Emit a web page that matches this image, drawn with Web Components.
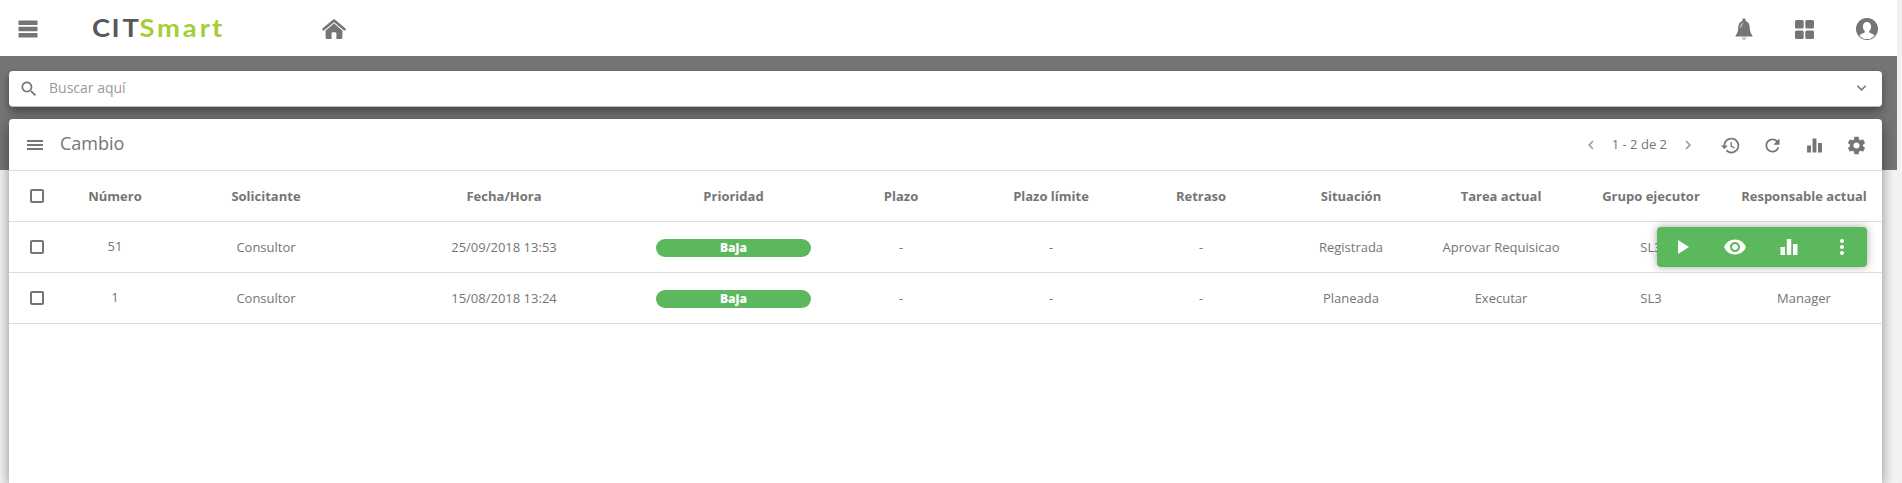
<!DOCTYPE html>
<html lang="es"><head><meta charset="utf-8"><title>CITSmart</title>
<style>
html,body{margin:0;height:100%}
body{font-family:"Open Sans",sans-serif;font-size:13px;color:#757575;background:#f1f1f1;overflow:hidden}
</style></head><body>
<cit-app></cit-app>
<script>
const ICONS={
 bars:['0 0 20 18','<rect x=".5" y=".5" width="19" height="4.4" rx=".6"/><rect x=".5" y="6.8" width="19" height="4.4" rx=".6"/><rect x=".5" y="13.1" width="19" height="4.4" rx=".6"/>'],
 home:['0 0 24 20','<path d="M12 3.9 3.6 11.4V18.500Q3.600 20 5.100 20H9.600V14.500Q9.600 13.300 10.800 13.300H13.200Q14.400 13.300 14.400 14.500V20H18.900Q20.400 20 20.400 18.500V11.400Z"/><path d="M1.500 10.300 12 1.500 22.500 10.300" fill="none" stroke="currentColor" stroke-width="2.500" stroke-linecap="round" stroke-linejoin="round"/><path d="M3.200 11.500 12 4.100 20.800 11.500" fill="none" stroke="#fff" stroke-width=".6"/>'],
 bell:['0 0 18 22','<path d="M9 .4c1 0 1.700.7 1.700 1.700v.8c2.700.9 3.900 3.200 4 6.100.1 4.200.9 6.300 2.600 8.300.4.500.2 1.300-.5 1.300H1.200c-.7 0-.9-.8-.5-1.300 1.700-2 2.500-4.100 2.600-8.300.1-2.900 1.300-5.200 4-6.100v-.8C7.300 1.100 8 .4 9 .4z"/><path d="M6.800 19.600h4.400A2.200 2.200 0 0 1 6.800 19.600z" opacity=".55"/><path d="M5.700 9.500c0-2.200.9-3.600 2.500-4.100" fill="none" stroke="#fff" stroke-width=".8"/>'],
 apps:['0 0 19 19','<rect width="8.700" height="8.500" rx="1.500"/><rect x="10.300" width="8.700" height="8.500" rx="1.500"/><rect y="10.500" width="8.700" height="8.500" rx="1.500"/><rect x="10.300" y="10.500" width="8.700" height="8.500" rx="1.500"/>'],
 user:['0 0 22 22','<circle cx="11" cy="11" r="11"/><path d="M11 3.900c2.500 0 4.100 1.900 4.100 4.500 0 1.900-.8 3.700-1.900 4.600v1.200c1.300 1.100 3.500 1.200 4.800 2.700 .5.6.3 1-.2 1.500A10 10 0 0 1 4.200 18.400c-.5-.5-.7-.9-.2-1.500 1.300-1.500 3.500-1.600 4.800-2.700V13C7.700 12.100 6.900 10.300 6.900 8.400 6.900 5.800 8.500 3.900 11 3.900z" fill="#fff"/>'],
 search:['0 0 24 24','<path d="M15.500 14h-.79l-.28-.27C15.410 12.590 16 11.110 16 9.500 16 5.910 13.090 3 9.500 3S3 5.910 3 9.500 5.910 16 9.500 16c1.610 0 3.090-.59 4.230-1.570l.27.28v.79l5 4.990L20.490 19l-4.990-5zm-6 0C7.010 14 5 11.990 5 9.500S7.010 5 9.500 5 14 7.010 14 9.500 11.990 14 9.500 14z"/>'],
 down:['0 0 24 24','<path d="M7.410 7.840 12 12.420l4.590-4.580L18 9.250l-6 6-6-6z"/>'],
 left:['0 0 24 24','<path d="M15.410 7.410 14 6l-6 6 6 6 1.410-1.410L10.830 12z"/>'],
 right:['0 0 24 24','<path d="M10 6 8.590 7.410 13.170 12l-4.580 4.590L10 18l6-6z"/>'],
 menu:['0 0 16 10','<path d="M0 0h16v2H0zM0 4h16v2H0zM0 8h16v2H0z"/>'],
 history:['0 0 24 24','<path d="M13 3c-4.970 0-9 4.030-9 9H1l3.890 3.890.07.14L9 12H6c0-3.870 3.130-7 7-7s7 3.130 7 7-3.130 7-7 7c-1.930 0-3.680-.79-4.940-2.060l-1.420 1.420C8.270 19.990 10.510 21 13 21c4.970 0 9-4.030 9-9s-4.030-9-9-9zm-1 5v5l4.280 2.540.72-1.210-3.500-2.080V8H12z"/>'],
 refresh:['0 0 24 24','<path d="M17.650 6.350C16.200 4.900 14.210 4 12 4c-4.420 0-7.990 3.580-7.990 8s3.570 8 7.990 8c3.730 0 6.840-2.550 7.730-6h-2.080c-.82 2.330-3.040 4-5.650 4-3.310 0-6-2.690-6-6s2.690-6 6-6c1.660 0 3.140.69 4.220 1.780L13 11h7V4l-2.350 2.350z"/>'],
 chart:['0 0 24 24','<path d="M9.800 20h4.400V4h-4.400v16zm-6.300 0h4.500v-8H3.500v8zM16 9v11h4.500V9H16z"/>'],
 gear:['0 0 24 24','<path d="M19.430 12.980c.04-.32.07-.64.07-.98s-.03-.66-.07-.98l2.110-1.650c.19-.15.24-.42.12-.64l-2-3.460c-.12-.22-.39-.3-.61-.22l-2.490 1c-.52-.4-1.080-.73-1.690-.98l-.38-2.650C14.460 2.180 14.250 2 14 2h-4c-.25 0-.46.180-.49.420l-.38 2.650c-.61.25-1.170.59-1.690.98l-2.490-1c-.23-.09-.49 0-.61.220l-2 3.460c-.13.220-.07.490.12.640l2.110 1.650c-.04.320-.07.650-.07.980s.03.660.07.980l-2.110 1.650c-.19.150-.24.420-.12.640l2 3.460c.12.220.39.3.61.220l2.490-1c.52.4 1.080.73 1.690.98l.38 2.650c.03.240.24.420.49.420h4c.25 0 .46-.18.49-.42l.38-2.650c.61-.25 1.170-.59 1.690-.98l2.490 1c.23.09.49 0 .61-.22l2-3.460c.12-.22.07-.49-.12-.64l-2.110-1.650zM12 15.500c-1.930 0-3.500-1.570-3.500-3.500s1.570-3.500 3.500-3.500 3.500 1.570 3.500 3.500-1.570 3.500-3.500 3.500z"/>'],
 box:['0 0 14 14','<rect x="1" y="1" width="12" height="12" rx="1" fill="none" stroke="currentColor" stroke-width="2"/>'],
 play:['0 0 24 24','<path d="M8 5v14l11-7z"/>'],
 eye:['0 0 24 24','<path d="M12 4.500C7 4.500 2.730 7.610 1 12c1.730 4.390 6 7.500 11 7.500s9.270-3.110 11-7.500c-1.730-4.390-6-7.500-11-7.500zM12 17c-2.760 0-5-2.240-5-5s2.240-5 5-5 5 2.240 5 5-2.240 5-5 5zm0-8c-1.660 0-3 1.340-3 3s1.340 3 3 3 3-1.340 3-3-1.340-3-3-3z"/>'],
 more:['0 0 24 24','<path d="M12 8c1.100 0 2-.9 2-2s-.9-2-2-2-2 .9-2 2 .9 2 2 2zm0 2c-1.100 0-2 .9-2 2s.9 2 2 2 2-.9 2-2-.9-2-2-2zm0 6c-1.100 0-2 .9-2 2s.9 2 2 2 2-.9 2-2-.9-2-2-2z"/>']
};
function define(name,html){
 customElements.define(name,class extends HTMLElement{
  constructor(){super();this.attachShadow({mode:'open'}).innerHTML=html}
 });
}
customElements.define('cit-icon',class extends HTMLElement{
 connectedCallback(){
  const [vb,body]=ICONS[this.getAttribute('name')],w=this.getAttribute('w')||24,h=this.getAttribute('h')||w;
  if(!this.shadowRoot)this.attachShadow({mode:'open'});
  this.shadowRoot.innerHTML=`<style>:host{display:block;flex:none}svg{display:block;fill:currentColor}</style><svg width="${w}" height="${h}" viewBox="${vb}">${body}</svg>`;
 }
});
define('cit-logo',`<style>:host{display:block;width:132px;height:30px}svg{display:block}text{font:700 24px Lato,sans-serif}</style>
<svg width="132" height="30"><g transform="scale(1.14 1)"><text x="-.8 16.200 25.800" y="23" fill="#58595b">CIT</text><text x="40.800 56.200 78.800 93.700 104.500" y="23" fill="#a5cd39">Smart</text></g></svg>`);
define('cit-header',`<style>:host{display:flex;align-items:center;height:56px;box-sizing:border-box;padding:2px 19px 0 18px;background:#fff;color:#757575}
cit-logo{margin:0 97px 0 55px}.sp{flex:1}.r{display:flex;align-items:center;gap:42px}</style>
<cit-icon name="bars" w="20" h="18"></cit-icon><cit-logo></cit-logo><cit-icon name="home" w="24" h="20"></cit-icon><span class="sp"></span>
<div class="r"><cit-icon name="bell" w="18" h="22"></cit-icon><cit-icon name="apps" w="19" h="19"></cit-icon><cit-icon name="user" w="22" h="22"></cit-icon></div>`);
define('cit-search',`<style>:host{display:flex;align-items:center;height:36px;box-sizing:border-box;background:#fff;border-radius:4px;padding:0 11px 0 10px;border-bottom:1px solid #bbb;box-shadow:0 4px 8px rgba(0,0,0,.42)}
span{flex:1;margin:0 0 2px 10px;font-size:14px;color:#999}</style>
<cit-icon name="search" w="20"></cit-icon><span><slot></slot></span><cit-icon name="down" w="19"></cit-icon>`);
define('cit-toolbar',`<style>:host{display:flex;align-items:center;height:51px;box-sizing:border-box;padding:1px 15.500px 0 18px}
h1{font-size:18px;font-weight:400;margin:0 0 4px 17px;flex:1}.pg{display:flex;align-items:center;color:#999;margin-right:22.500px}.pg span{color:#757575;margin:-2px 12px 0}.t{display:flex;gap:21px}</style>
<cit-icon name="menu" w="16" h="10"></cit-icon><h1><slot></slot></h1>
<div class="pg"><cit-icon name="left" w="18"></cit-icon><span>1 - 2 de 2</span><cit-icon name="right" w="18"></cit-icon></div>
<div class="t"><cit-icon name="history" w="21"></cit-icon><cit-icon name="refresh" w="21"></cit-icon><cit-icon name="chart" w="21"></cit-icon><cit-icon name="gear" w="21"></cit-icon></div>`);
define('cit-pill',`<style>:host{display:block;height:18px;line-height:18px;margin:2px 15px 0;border-radius:9px;background:#5cb85c;color:#fff;font-size:12px;font-weight:800;text-align:center}</style><slot></slot>`);
define('cit-row',`<style>:host{display:grid;position:relative;grid-template-columns:56px 100px 202px 274px 185px repeat(6,150px) 156px;align-items:center;text-align:center;height:51px;box-sizing:border-box;border-top:1px solid #ddd}
:host([head]){font-weight:700}cit-icon{justify-self:center}</style><cit-icon name="box" w="14"></cit-icon><slot></slot><slot name="actions"></slot>`);
define('cit-actions',`<style>:host{position:absolute;right:15px;top:5px;width:210px;height:40px;box-sizing:border-box;padding:0 13px;display:flex;justify-content:space-between;align-items:center;background:#5cb85c;color:#fff;border-radius:4px;box-shadow:0 0 8px rgba(0,0,0,.35)}</style>
<cit-icon name="play"></cit-icon><cit-icon name="eye"></cit-icon><cit-icon name="chart"></cit-icon><cit-icon name="more"></cit-icon>`);
define('cit-card',`<style>:host{display:block;flex:1;background:#fff;border-radius:4px 4px 0 0;box-shadow:0 4px 14px rgba(0,0,0,.45)}.end{border-top:1px solid #ddd}</style><slot></slot><div class="end"></div>`);
const row=(cells,n='')=>`<cit-row>${cells.map((c,i)=>i==3?`<cit-pill>${c}</cit-pill>`:`<span${i==0?' class="n"':''}>${c}</span>`).join('')}${n}</cit-row>`;
define('cit-app',`<style>:host{display:flex;flex-direction:column;width:1897px;height:483px;overflow:hidden}
main{flex:1;box-sizing:border-box;display:flex;flex-direction:column;gap:12px;padding:15px 15px 0 9px;background:linear-gradient(#757575 114px,#f5f5f5 114px)}
.n{margin-top:-2px}</style>
<cit-header></cit-header><main><cit-search>Buscar aquí</cit-search><cit-card><cit-toolbar>Cambio</cit-toolbar>
<cit-row head>${['Número','Solicitante','Fecha/Hora','Prioridad','Plazo','Plazo límite','Retraso','Situación','Tarea actual','Grupo ejecutor','Responsable actual'].map(t=>`<span>${t}</span>`).join('')}</cit-row>
${row(['51','Consultor','25/09/2018 13:53','Baja','-','-','-','Registrada','Aprovar Requisicao','SL3',''],'<cit-actions slot="actions"></cit-actions>')}
${row(['1','Consultor','15/08/2018 13:24','Baja','-','-','-','Planeada','Executar','SL3','Manager'])}
</cit-card></main>`);
</script></body></html>
